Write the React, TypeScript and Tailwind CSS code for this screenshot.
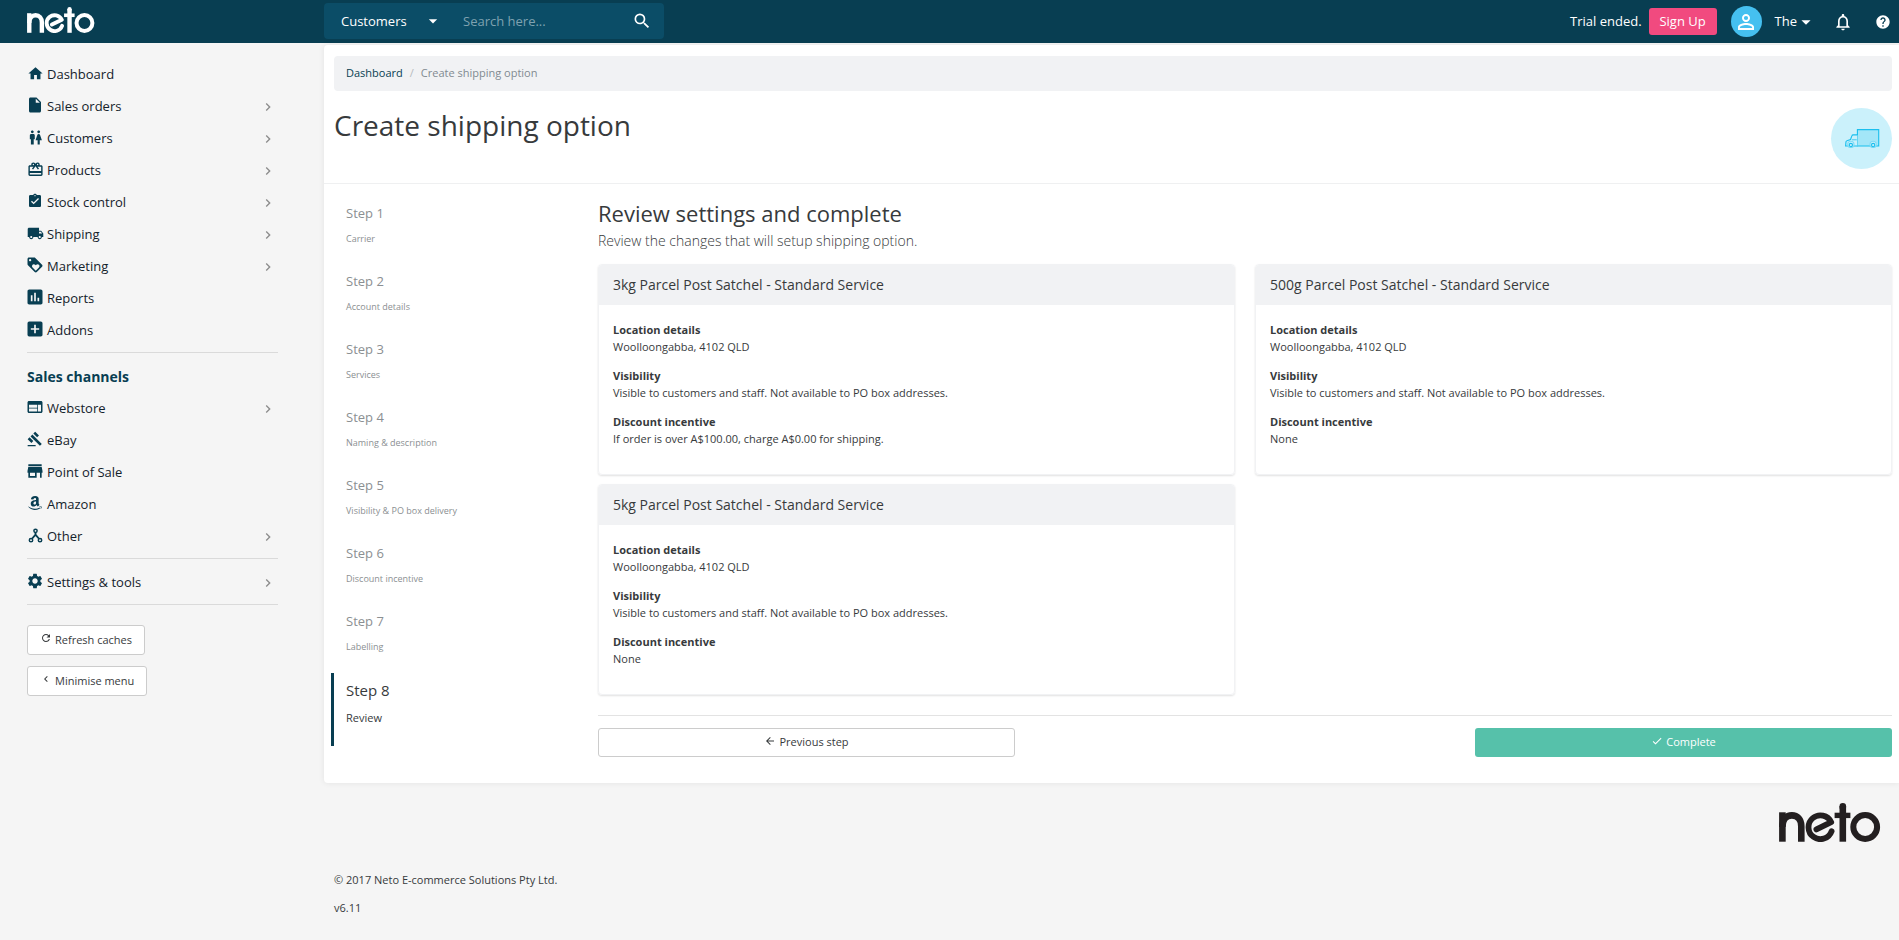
import React from "react";
import type { IconType } from "react-icons";
import {
  MdAddBox,
  MdArrowBack,
  MdArrowDropDown,
  MdAssessment,
  MdAssignmentTurnedIn,
  MdCardGiftcard,
  MdCheck,
  MdChevronLeft,
  MdChevronRight,
  MdGavel,
  MdHelp,
  MdHome,
  MdInsertDriveFile,
  MdLocalShipping,
  MdLoyalty,
  MdNotificationsNone,
  MdPersonOutline,
  MdRefresh,
  MdSearch,
  MdSettings,
  MdStore,
  MdWc,
  MdWeb,
} from "react-icons/md";
import { FaAmazon } from "react-icons/fa";

type IconLike = IconType | React.FC<{ className?: string }>;
type LinkItem = { label: string; icon: IconLike; size: string; more?: boolean };

function NetoLogo({ className }: { className: string }) {
  return (
    <svg viewBox="0 0 102 39" className={className} fill="none" stroke="currentColor" strokeWidth="6.6" role="img" aria-label="neto">
      <path d="M3.4 38.7V9.3" />
      <path d="M3.4 24C3.4 16.4 7.4 12.4 12.9 12.4s9.4 4 9.4 10.8v15.5" />
      <path d="M37.4 26.4 52.2 19.2A11.9 11.9 0 1 0 52.6 28.3" strokeLinecap="round" strokeLinejoin="round" strokeWidth="5.8" />
      <path d="M63.8 38.7V3" />
      <path d="M63.8 4V3.4" strokeLinecap="round" />
      <path d="M55.6 12.4h15.8" strokeWidth="5.4" />
      <circle cx="86.2" cy="24" r="11.9" strokeWidth="6" />
    </svg>
  );
}

function NodesIcon({ className }: { className?: string }) {
  return (
    <svg viewBox="0 0 24 24" className={className} fill="none" stroke="currentColor" strokeWidth="2.4">
      <circle cx="12" cy="4.4" r="2.6" />
      <circle cx="4.8" cy="19.4" r="2.7" />
      <circle cx="19.2" cy="19.4" r="2.7" />
      <path d="M12 7v5.5M6.4 17.2 12 10.6l5.6 6.6" strokeWidth="3" />
    </svg>
  );
}

function TruckDrawing() {
  return (
    <svg viewBox="0 0 106 58" className="h-[19px] w-9" fill="none" stroke="#1bbfee" strokeWidth="3.4">
      <path d="M39 2h65v50H39z" fill="#a3e6f8" />
      <path d="M39 18H26q-3 0-4 3l-4 11-11 4q-3 1-3 4l-1 12h36" fill="#cbf1fb" />
      <path d="M22 33h15" strokeWidth="2.4" />
      <circle cx="19" cy="47" r="9.5" fill="#cbf1fb" stroke="#7fdbf6" />
      <circle cx="19" cy="49" r="5" />
      <circle cx="87" cy="47" r="9.5" fill="#cbf1fb" stroke="#7fdbf6" />
      <circle cx="87" cy="49" r="5" />
    </svg>
  );
}

const mainLinks: LinkItem[] = [
  { label: "Dashboard", icon: MdHome, size: "size-[17px]" },
  { label: "Sales orders", icon: MdInsertDriveFile, size: "size-[18px]", more: true },
  { label: "Customers", icon: MdWc, size: "size-[17px]", more: true },
  { label: "Products", icon: MdCardGiftcard, size: "size-[17px]", more: true },
  { label: "Stock control", icon: MdAssignmentTurnedIn, size: "size-4", more: true },
  { label: "Shipping", icon: MdLocalShipping, size: "size-[17px]", more: true },
  { label: "Marketing", icon: MdLoyalty, size: "size-[18px]", more: true },
  { label: "Reports", icon: MdAssessment, size: "size-5" },
  { label: "Addons", icon: MdAddBox, size: "size-5" },
];

const channelLinks: LinkItem[] = [
  { label: "Webstore", icon: MdWeb, size: "size-[18px]", more: true },
  { label: "eBay", icon: MdGavel, size: "size-4" },
  { label: "Point of Sale", icon: MdStore, size: "size-5" },
  { label: "Amazon", icon: FaAmazon, size: "size-4" },
  { label: "Other", icon: NodesIcon, size: "size-[15px]", more: true },
];

const steps = [
  "Carrier",
  "Account details",
  "Services",
  "Naming & description",
  "Visibility & PO box delivery",
  "Discount incentive",
  "Labelling",
];

const options = [
  { name: "3kg Parcel Post Satchel - Standard Service", discount: "If order is over A$100.00, charge A$0.00 for shipping." },
  { name: "500g Parcel Post Satchel - Standard Service", discount: "None" },
  { name: "5kg Parcel Post Satchel - Standard Service", discount: "None" },
];

function NavLink({ label, icon: Icon, size, more }: LinkItem) {
  return (
    <li>
      <a href="#" className="flex h-8 items-center text-[13px] text-[#14222b]">
        <span className="mr-1 mb-1 flex w-4 shrink-0 items-center justify-center text-[#083e52]">
          <Icon className={`shrink-0 ${size}`} />
        </span>
        <span className="flex-1">{label}</span>
        {more && <MdChevronRight className="mr-0.5 size-4 text-[#8c8c8c]" />}
      </a>
    </li>
  );
}

function Detail({ title, text }: { title: string; text: string }) {
  return (
    <div>
      <dt className="font-bold">{title}</dt>
      <dd>{text}</dd>
    </div>
  );
}

function OptionCard({ name, discount }: { name: string; discount: string }) {
  return (
    <section className="overflow-hidden rounded border border-[#f1f2f4] shadow-[0_1px_2px_rgba(0,0,0,0.12)]">
      <h3 className="bg-[#f1f2f4] px-3.5 py-2.5 text-[14px] leading-5">{name}</h3>
      <dl className="flex flex-col gap-3 px-3.5 pt-4 pb-[27px] text-[11px] leading-[17px]">
        <Detail title="Location details" text="Woolloongabba, 4102 QLD" />
        <Detail title="Visibility" text="Visible to customers and staff. Not available to PO box addresses." />
        <Detail title="Discount incentive" text={discount} />
      </dl>
    </section>
  );
}

export default function App() {
  return (
    <div className="flex min-h-screen flex-col bg-[#f5f5f5] font-['Open_Sans',sans-serif] text-[#373a3c]">
      <header className="flex h-[43px] items-center bg-[#083e52] text-[13px] text-white">
        <a href="#" className="w-[324px] shrink-0 pl-[27px]">
          <NetoLogo className="mb-1 h-[26px] w-[68px]" />
        </a>
        <form className="mb-0.5 flex h-9 w-[340px] items-center rounded bg-[#0b4d67] pr-3 pl-[17px]">
          <div className="flex items-center">
            <select aria-label="Search in" className="h-7 w-[82px] appearance-none bg-transparent leading-7 outline-none">
              <option>Customers</option>
            </select>
            <MdArrowDropDown className="pointer-events-none size-5" />
          </div>
          <input
            type="search"
            aria-label="Search"
            placeholder="Search here..."
            className="ml-5 h-7 min-w-0 flex-1 bg-transparent outline-none placeholder:text-[#7fa2b0]"
          />
          <button type="submit" aria-label="Search">
            <MdSearch className="size-5" />
          </button>
        </form>
        <div className="ml-auto flex items-center pr-2">
          <span>Trial ended.</span>
          <a href="#" className="ml-[7px] flex h-[27px] w-[68px] items-center justify-center rounded-[3px] bg-[#f14a7f]">
            Sign Up
          </a>
          <span className="ml-3.5 flex size-[31px] items-center justify-center rounded-full bg-[#45c0f0]">
            <MdPersonOutline className="size-6" />
          </span>
          <button className="ml-[13px] flex items-center">
            The
            <MdArrowDropDown className="-ml-0.5 size-[22px]" />
          </button>
          <button aria-label="Notifications" className="ml-4">
            <MdNotificationsNone className="size-5" />
          </button>
          <button aria-label="Help" className="ml-[22px]">
            <MdHelp className="size-4" />
          </button>
        </div>
      </header>

      <div className="flex flex-1">
        <aside className="w-[324px] shrink-0 pt-4 pr-[46px] pl-[27px]">
          <nav>
            <ul>
              {mainLinks.map((l) => (
                <NavLink key={l.label} {...l} />
              ))}
            </ul>
            <hr className="mt-[5px] border-[#dadada]" />
            <h2 className="mt-3 mb-1 text-[14px] leading-6 font-bold text-[#083e52]">Sales channels</h2>
            <ul>
              {channelLinks.map((l) => (
                <NavLink key={l.label} {...l} />
              ))}
            </ul>
            <hr className="mt-[5px] mb-2 border-[#dadada]" />
            <ul>
              <NavLink label="Settings & tools" icon={MdSettings} size="size-[18px]" more />
            </ul>
            <hr className="mt-[5px] border-[#dadada]" />
          </nav>
          <div className="mt-5 flex flex-col items-start gap-[11px] text-[11px]">
            <button className="flex h-[30px] items-center gap-[3px] rounded-[3px] border border-[#ccc] bg-white px-3">
              <MdRefresh className="mb-1 size-3" />
              Refresh caches
            </button>
            <button className="flex h-[30px] items-center gap-[3px] rounded-[3px] border border-[#ccc] bg-white px-3">
              <MdChevronLeft className="mb-1 size-3" />
              Minimise menu
            </button>
          </div>
        </aside>

        <div className="flex min-w-0 flex-1 flex-col pt-0.5">
          <main className="rounded-l bg-white shadow-[0_0_6px_rgba(0,0,0,0.08)]">
            <div className="px-2.5 pt-[11px] pr-[7px]">
              <nav className="flex h-[35px] items-center rounded bg-[#f1f2f4] px-3 text-[11px] text-[#818a91]" aria-label="Breadcrumb">
                <a href="#" className="text-[#083e52]">
                  Dashboard
                </a>
                <span className="px-[7px] text-[#b5babd]">/</span>
                <span>Create shipping option</span>
              </nav>
              <div className="flex h-[92px] items-start justify-between">
                <h1 className="pt-4 text-[28px] leading-9">Create shipping option</h1>
                <div className="mt-[17px] flex size-[61px] items-center justify-center rounded-full bg-[#cbf1fb]">
                  <TruckDrawing />
                </div>
              </div>
            </div>

            <div className="flex border-t border-[#eff0f1] pt-[13px] pr-[7px] pb-[26px] pl-[7px]">
              <ol className="w-[267px] shrink-0">
                {steps.map((name, i) => (
                  <li key={name} className="h-[68px] pt-1.5 pl-[15px] text-[#8b8f92]">
                    <a href="#" className="block text-[13px] leading-5">
                      Step {i + 1}
                    </a>
                    <div className="pt-2 text-[9px] leading-4">{name}</div>
                  </li>
                ))}
                <li className="h-[73px] border-l-[3px] border-[#083e52] pt-[7px] pl-3" aria-current="step">
                  <a href="#" className="block text-[15px] leading-5">
                    Step 8
                  </a>
                  <div className="pt-2.5 text-[11px] leading-4">Review</div>
                </li>
              </ol>

              <div className="min-w-0 flex-1">
                <h2 className="text-[22px] leading-8">Review settings and complete</h2>
                <p className="text-[14px] leading-6 font-light">Review the changes that will setup shipping option.</p>
                <div className="mt-[11px] grid grid-cols-2 gap-x-5 gap-y-[9px]">
                  {options.map((o) => (
                    <OptionCard key={o.name} {...o} />
                  ))}
                </div>
                <hr className="mt-5 mb-3 border-[#e3e3e3]" />
                <div className="flex justify-between text-[11px]">
                  <button className="flex h-[29px] w-[417px] items-center justify-center gap-[3px] rounded-[3px] border border-[#ccc] bg-white">
                    <MdArrowBack className="mb-1 size-3" />
                    Previous step
                  </button>
                  <button className="flex h-[29px] w-[417px] items-center justify-center gap-[3px] rounded-[3px] bg-[#56c1aa] text-white">
                    <MdCheck className="mb-1 size-3" />
                    Complete
                  </button>
                </div>
              </div>
            </div>
          </main>

          <footer className="px-2.5 pt-5 text-[11px] leading-4">
            <NetoLogo className="mr-2 ml-auto h-[39px] w-[102px] text-[#231f20]" />
            <p className="mt-[30px]">© 2017 Neto E-commerce Solutions Pty Ltd.</p>
            <p className="mt-3">v6.11</p>
          </footer>
        </div>
      </div>
    </div>
  );
}
